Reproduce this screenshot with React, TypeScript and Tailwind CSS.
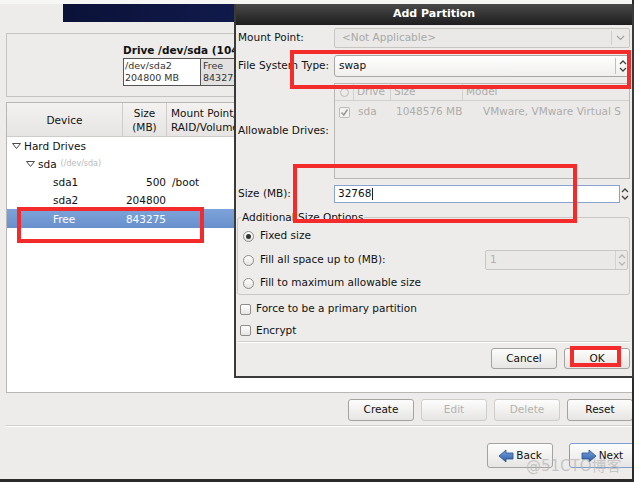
import React from "react";

const font = { fontFamily: '"DejaVu Sans", "Noto Sans CJK SC", sans-serif' };

function Tri({ className = "" }: { className?: string }) {
  return (
    <svg width="9" height="6" viewBox="0 0 9 6" className={className}>
      <polygon points="0.5,0.5 8.5,0.5 4.5,5.5" fill="none" stroke="#4a4a4a" strokeWidth="1" />
    </svg>
  );
}

function Btn({ children, disabled = false, focus = false, w = "w-[66px]", h = "h-[22px]" }: { children: React.ReactNode; disabled?: boolean; focus?: boolean; w?: string; h?: string }) {
  return (
    <div
      className={`${w} ${h} shrink-0 flex items-center justify-center rounded-[3px] border bg-gradient-to-b from-[#fdfdfd] to-[#e6e5e3] text-[10.5px] ${
        disabled ? "text-[#b3b2b0] border-[#cfcdca]" : focus ? "text-[#111] border-[#7d9ccf]" : "text-[#111] border-[#a5a3a0]"
      }`}
    >
      {children}
    </div>
  );
}

function Arrow({ dir }: { dir: "left" | "right" }) {
  const pts = dir === "left" ? "1,7 8,1 8,4 15,4 15,10 8,10 8,13" : "15,7 8,1 8,4 1,4 1,10 8,10 8,13";
  return (
    <svg width="16" height="14" viewBox="0 0 16 14">
      <defs>
        <linearGradient id={`g${dir}`} x1="0" y1="0" x2="0" y2="1">
          <stop offset="0" stopColor="#7aa3db" />
          <stop offset="1" stopColor="#2a5ca8" />
        </linearGradient>
      </defs>
      <polygon points={pts} fill={`url(#g${dir})`} stroke="#23508f" strokeWidth="0.8" />
    </svg>
  );
}

function Radio({ on = false }: { on?: boolean }) {
  return (
    <div className="w-[11px] h-[11px] rounded-full border border-[#8f8d8a] bg-gradient-to-b from-[#ffffff] to-[#e4e3e1] flex items-center justify-center shrink-0">
      {on && <div className="w-[5px] h-[5px] rounded-full bg-[#333]" />}
    </div>
  );
}

function Check() {
  return <div className="w-[11px] h-[11px] rounded-[2px] border border-[#8f8d8a] bg-gradient-to-b from-[#ffffff] to-[#e6e5e3] shrink-0" />;
}

function Spin({ disabled = false }: { disabled?: boolean }) {
  const c = disabled ? "#b9b7b4" : "#444";
  return (
    <svg width="8" height="14" viewBox="0 0 8 14">
      <polyline points="1,5 4,2 7,5" fill="none" stroke={c} strokeWidth="1.3" />
      <polyline points="1,9 4,12 7,9" fill="none" stroke={c} strokeWidth="1.3" />
    </svg>
  );
}

export default function App() {
  return (
    <div className="relative w-[637px] h-[484px] bg-white overflow-hidden text-[10.5px] text-[#111]" style={font}>
      {/* main window */}
      <div className="w-[634px] h-[482px] bg-[#edecea] border-r-2 border-b-[3px] border-[#2b2b2b] flex flex-col overflow-hidden">
        <div className="h-[4px] bg-[#f6f6f5] shrink-0" />
        <div className="h-[18px] pl-[63px] shrink-0 flex">
          <div className="flex-1 bg-gradient-to-r from-[#0b1238] via-[#142058] to-[#0b1238]" />
        </div>

        {/* drive box */}
        <div className="mt-[11px] ml-[6px] w-[640px] h-[64px] shrink-0 border border-[#c6c4c1] flex flex-col pl-[116px] pt-[9px]">
          <div className="font-bold text-[10.5px] leading-[14px] whitespace-nowrap">Drive /dev/sda (1048576 MB) (Model: VMware, VMware Virtual S)</div>
          <div className="mt-[1px] h-[28px] flex border border-[#555] w-[500px]">
            <div className="w-[77px] bg-white border-r border-[#555] text-[9.5px] leading-[12px] text-[#333] pl-[1px] pt-[1px]">
              <div>/dev/sda2</div>
              <div>204800 MB</div>
            </div>
            <div className="flex-1 bg-[#e2e1df] text-[9.5px] leading-[12px] text-[#333] pl-[2px] pt-[1px]">
              <div>Free</div>
              <div>843275 MB</div>
            </div>
          </div>
        </div>

        {/* tree table */}
        <div className="mt-[5px] ml-[6px] w-[640px] h-[291px] shrink-0 border border-[#b9b7b4] bg-white flex flex-col">
          <div className="h-[34px] flex border-b border-[#cfcdca] bg-gradient-to-b from-[#f3f2f0] to-[#e6e5e3] shrink-0 text-[10.5px] leading-[14px]">
            <div className="w-[116px] flex items-center justify-center border-r border-[#cfcdca]">Device</div>
            <div className="w-[44px] flex flex-col items-center justify-center border-r border-[#cfcdca]">
              <div>Size</div>
              <div>(MB)</div>
            </div>
            <div className="flex-1 flex flex-col justify-center pl-[4px] whitespace-nowrap">
              <div>Mount Point/</div>
              <div>RAID/Volume</div>
            </div>
          </div>
          <div className="flex flex-col leading-[18px]">
            <div className="h-[18px] flex items-center pl-[5px]">
              <Tri />
              <span className="ml-[3px]">Hard Drives</span>
            </div>
            <div className="h-[18px] flex items-center pl-[19px]">
              <Tri />
              <span className="ml-[3px]">sda</span>
              <span className="ml-[4px] text-[8px] text-[#b9b9b9]">(/dev/sda)</span>
            </div>
            <div className="h-[18px] flex items-center">
              <div className="w-[116px] pl-[46px]">sda1</div>
              <div className="w-[44px] text-right pr-[1px]">500</div>
              <div className="pl-[5px]">/boot</div>
            </div>
            <div className="h-[18px] flex items-center">
              <div className="w-[116px] pl-[46px]">sda2</div>
              <div className="w-[44px] text-right pr-[1px]">204800</div>
            </div>
            <div className="h-[19px] flex items-center bg-gradient-to-b from-[#7ea3da] to-[#6890cc] text-white">
              <div className="w-[116px] pl-[46px]">Free</div>
              <div className="w-[44px] text-right pr-[1px]">843275</div>
            </div>
          </div>
        </div>

        {/* action buttons */}
        <div className="mt-[6px] ml-[348px] flex gap-[7px] shrink-0">
          <Btn>Create</Btn>
          <Btn disabled>Edit</Btn>
          <Btn disabled>Delete</Btn>
          <Btn>Reset</Btn>
        </div>
        <div className="mt-[4px] ml-[6px] h-[2px] border-t border-[#d2d0cd] border-b border-b-white shrink-0" />

        <div className="mt-[16px] ml-[487px] flex gap-[16px] shrink-0">
          <Btn h="h-[25px]">
            <Arrow dir="left" />
            <span className="ml-[2px]">Back</span>
          </Btn>
          <Btn h="h-[25px]" focus>
            <Arrow dir="right" />
            <span className="ml-[2px]">Next</span>
          </Btn>
        </div>
      </div>

      {/* dialog */}
      <div className="absolute left-[234px] top-[4px] w-[400px] h-[374px] bg-[#edecea] border-x-2 border-b-2 border-[#3a3a3a] flex flex-col overflow-hidden">
        <div className="h-[21px] shrink-0 bg-gradient-to-b from-[#4a4a4a] to-[#1e1e1e] flex items-center justify-center text-white font-bold text-[11px]">
          Add Partition
        </div>
        <div className="flex flex-col px-[2px]">
          <div className="mt-[3px] h-[20px] flex items-center">
            <div className="w-[96px] shrink-0">Mount Point:</div>
            <div className="flex-1 h-full rounded-[2px] border border-[#c7c5c2] bg-[#eae9e7] flex items-center">
              <div className="flex-1 pl-[7px] text-[#a9a8a6]">&lt;Not Applicable&gt;</div>
              <div className="w-px h-[14px] bg-[#d0cecb]" />
              <div className="w-[17px] flex items-center justify-center">
                <svg width="9" height="6" viewBox="0 0 9 6">
                  <polyline points="1,1 4.5,4.5 8,1" fill="none" stroke="#a5a3a0" strokeWidth="1.2" />
                </svg>
              </div>
            </div>
          </div>
          <div className="mt-[7px] h-[22px] flex items-center">
            <div className="w-[96px] shrink-0">File System Type:</div>
            <div className="flex-1 h-full rounded-[3px] border border-[#a9a7a4] bg-gradient-to-b from-[#ffffff] to-[#f0efed] flex items-center">
              <div className="flex-1 pl-[4px]">swap</div>
              <div className="w-px h-[16px] bg-[#c2c0bd]" />
              <div className="w-[13px] flex items-center justify-center">
                <Spin />
              </div>
            </div>
          </div>
          <div className="mt-[6px] h-[96px] flex items-center">
            <div className="w-[96px] shrink-0">Allowable Drives:</div>
            <div className="flex-1 h-full border border-[#bab8b5] bg-[#eceae8] flex flex-col text-[#adacaa]">
              <div className="h-[17px] flex items-center border-b border-[#d3d1ce]">
                <div className="w-[18px] flex justify-center">
                  <div className="w-[9px] h-[9px] rounded-full border border-[#bdbbb8]" />
                </div>
                <div className="w-[37px] border-l border-[#d3d1ce] pl-[3px]">Drive</div>
                <div className="w-[72px] border-l border-[#d3d1ce] pl-[3px]">Size</div>
                <div className="flex-1 border-l border-[#d3d1ce] pl-[3px]">Model</div>
              </div>
              <div className="h-[22px] flex items-center whitespace-nowrap">
                <div className="w-[18px] flex justify-center">
                  <div className="w-[11px] h-[11px] rounded-[2px] border border-[#bdbbb8] bg-[#f4f3f2] flex items-center justify-center">
                    <svg width="9" height="9" viewBox="0 0 9 9">
                      <polyline points="1.5,4.5 3.8,7 7.5,1.5" fill="none" stroke="#9a9896" strokeWidth="1.5" />
                    </svg>
                  </div>
                </div>
                <div className="w-[40px] pl-[5px]">sda</div>
                <div className="w-[85px] pl-[3px]">1048576 MB</div>
                <div className="pl-[5px]">VMware, VMware Virtual S</div>
              </div>
            </div>
          </div>
          <div className="mt-[6px] h-[18px] flex items-center">
            <div className="w-[96px] shrink-0">Size (MB):</div>
            <div className="flex-1 h-full flex">
              <div className="flex-1 border border-[#88a3cf] bg-white flex items-center pl-[3px]">
                32768<span className="inline-block w-px h-[12px] bg-[#222] ml-[1px]" />
              </div>
              <div className="w-[10px] flex items-center justify-center">
                <Spin />
              </div>
            </div>
          </div>

          {/* frame */}
          <div className="relative mt-[14px] -ml-[1px] h-[78px] border border-[#cac8c5] rounded-[3px] flex flex-col pt-[6px]">
            <div className="absolute -top-[8px] left-[3px] bg-[#edecea] px-[1px] leading-[14px]">Additional Size Options</div>
            <div className="h-[24px] flex items-center pl-[5px] gap-[6px]">
              <Radio on />
              <span>Fixed size</span>
            </div>
            <div className="h-[24px] flex items-center pl-[5px]">
              <Radio />
              <span className="ml-[6px] flex-1">Fill all space up to (MB):</span>
              <div className="mr-[1px] w-[143px] h-[20px] rounded-[2px] border border-[#c9c7c4] bg-[#eae9e7] flex items-center">
                <div className="flex-1 pl-[4px] text-[#b0afad]">1</div>
                <div className="w-[12px] h-full border-l border-[#d3d1ce] flex items-center justify-center">
                  <Spin disabled />
                </div>
              </div>
            </div>
            <div className="h-[22px] flex items-center pl-[5px] gap-[6px]">
              <Radio />
              <span>Fill to maximum allowable size</span>
            </div>
          </div>

          <div className="mt-[3px] h-[22px] flex items-center pl-[2px] gap-[5px]">
            <Check />
            <span>Force to be a primary partition</span>
          </div>
          <div className="h-[21px] flex items-center pl-[2px] gap-[5px]">
            <Check />
            <span>Encrypt</span>
          </div>
          <div className="h-[2px] border-t border-[#d2d0cd] border-b border-b-white" />
          <div className="mt-[5px] flex justify-end gap-[7px]">
            <Btn h="h-[21px]">Cancel</Btn>
            <Btn h="h-[21px]">OK</Btn>
          </div>
        </div>
      </div>

      {/* annotation boxes */}
      <div className="absolute left-[290px] top-[50px] w-[341px] h-[39px] border-[4px] border-[#f42b2b]" />
      <div className="absolute left-[293px] top-[164px] w-[284px] h-[59px] border-[4px] border-[#f42b2b]" />
      <div className="absolute left-[17px] top-[207px] w-[187px] h-[36px] border-[4px] border-[#f42b2b]" />
      <div className="absolute left-[570px] top-[346px] w-[51px] h-[21px] border-[4px] border-[#f42b2b]" />

      {/* watermark */}
      <div className="absolute left-[526px] top-[456px] text-[15px] leading-[20px] text-[#b4b4b4]/70 whitespace-nowrap">@51CTO博客</div>
    </div>
  );
}
